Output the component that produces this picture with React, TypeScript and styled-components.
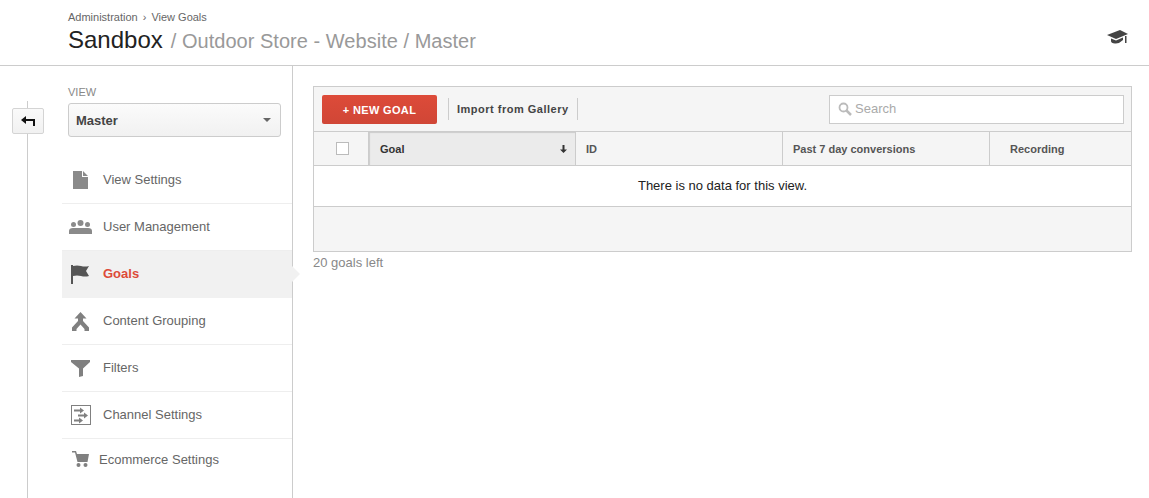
import React from "react";
import styled, { createGlobalStyle } from "styled-components";

const GlobalStyle = createGlobalStyle`
  html, body { margin: 0; padding: 0; background: #fff; }
  body { font-family: "Liberation Sans", Arial, sans-serif; overflow: hidden; }
  * { box-sizing: border-box; }
`;

const Page = styled.div`
  width: 1149px;
  height: 498px;
  display: flex;
  flex-direction: column;
  overflow: hidden;
`;

const Header = styled.header`
  height: 66px;
  flex: none;
  border-bottom: 1px solid #ccc;
  padding: 11px 21px 0 68px;
  display: flex;
  justify-content: space-between;
`;

const Crumbs = styled.div`
  font-size: 11px;
  line-height: 13px;
  color: #666;
  display: flex;
  gap: 5px;
`;

const Title = styled.h1`
  margin: 2px 0 0;
  font-size: 24px;
  line-height: 28px;
  font-weight: 400;
  color: #222;
`;

const TitleRest = styled.span`
  font-size: 20px;
  color: #999;
  margin-left: 8px;
  letter-spacing: 0.03px;
`;

const CapIcon = styled.svg`
  width: 21px;
  height: 15px;
  margin-top: 19px;
  fill: #444;
`;

const Body = styled.div`
  flex: 1;
  display: flex;
  min-height: 0;
`;

const Rail = styled.div`
  width: 62px;
  flex: none;
  position: relative;
  padding: 42px 0 0 12px;
  &::before {
    content: "";
    position: absolute;
    left: 27px;
    top: 35px;
    bottom: 0;
    width: 1px;
    background: #ccc;
  }
`;

const BackButton = styled.button`
  position: relative;
  width: 32px;
  height: 26px;
  padding: 0;
  border: 1px solid #d4d4d4;
  border-radius: 2px;
  background: linear-gradient(#fafafa, #f1f1f1);
  display: flex;
  align-items: center;
  justify-content: center;
`;

const Sidebar = styled.aside`
  width: 231px;
  flex: none;
  border-right: 1px solid #ccc;
`;

const ViewBlock = styled.div`
  padding: 20px 11px 0 6px;
  height: 91px;
`;

const ViewLabel = styled.div`
  font-size: 11px;
  line-height: 13px;
  color: #888;
  margin-bottom: 4px;
`;

const Select = styled.div`
  height: 34px;
  border: 1px solid #ccc;
  border-radius: 3px;
  background: linear-gradient(#fbfbfb, #f1f1f1);
  padding: 0 9px 0 7px;
  display: flex;
  align-items: center;
  justify-content: space-between;
  font-size: 13px;
  font-weight: 700;
  color: #444;
`;

const Caret = styled.span`
  width: 0;
  height: 0;
  border-left: 4px solid transparent;
  border-right: 4px solid transparent;
  border-top: 4px solid #666;
`;

const NavItem = styled.div<{ $active?: boolean; $last?: boolean }>`
  position: relative;
  height: 47px;
  display: flex;
  align-items: center;
  font-size: 13px;
  color: ${(p) => (p.$active ? "#dd4b39" : "#666")};
  font-weight: ${(p) => (p.$active ? 700 : 400)};
  background: ${(p) => (p.$active ? "#f1f1f1" : "transparent")};
  border-bottom: 1px solid ${(p) => (p.$last || p.$active ? "transparent" : "#eee")};
  ${(p) =>
    p.$active &&
    `&::after {
      content: "";
      position: absolute;
      right: -8px;
      top: 15px;
      width: 0;
      height: 0;
      border-top: 8px solid transparent;
      border-bottom: 8px solid transparent;
      border-left: 8px solid #f1f1f1;
    }`}
`;

const NavIcon = styled.span<{ $wide?: boolean }>`
  width: ${(p) => (p.$wide ? 37 : 41)}px;
  flex: none;
  display: flex;
  justify-content: center;
  padding-right: ${(p) => (p.$wide ? 0 : 4)}px;
  margin-bottom: ${(p) => (p.$wide ? 6 : 0)}px;
  svg { display: block; }
`;

const NavText = styled.span<{ $wide?: boolean }>`
  margin-bottom: ${(p) => (p.$wide ? 6 : 2)}px;
`;

const Main = styled.main`
  flex: 1;
  padding: 20px 17px 0 20px;
`;

const Table = styled.div`
  border: 1px solid #ccc;
  background: #f5f5f5;
`;

const Toolbar = styled.div`
  height: 45px;
  padding: 8px 7px 0 8px;
  display: flex;
  align-items: flex-start;
  border-bottom: 1px solid #ccc;
`;

const NewGoal = styled.button`
  width: 115px;
  height: 29px;
  border: 0;
  border-radius: 2px;
  background: linear-gradient(#dd4b39, #d04636);
  color: #fff;
  font: 700 11px "Liberation Sans", Arial, sans-serif;
  letter-spacing: 0.35px;
  padding: 0;
`;

const ImportLink = styled.div`
  margin: 3px 0 0 11px;
  height: 22px;
  padding: 0 8px;
  border-left: 1px solid #ccc;
  border-right: 1px solid #ccc;
  font-size: 11px;
  font-weight: 700;
  letter-spacing: 0.5px;
  line-height: 22px;
  color: #444;
`;

const Search = styled.div`
  margin-left: auto;
  width: 295px;
  height: 29px;
  background: #fff;
  border: 1px solid #ccc;
  display: flex;
  align-items: center;
  gap: 3px;
  padding: 0 0 2px 8px;
  font-size: 13px;
  color: #aaa;
`;

const HeadRow = styled.div`
  height: 34px;
  display: grid;
  grid-template-columns: 55px 207px 207px 207px 1fr;
  border-bottom: 1px solid #ccc;
  font-size: 11px;
  font-weight: 700;
  color: #555;
`;

const HeadCell = styled.div<{ $sorted?: boolean; $pad?: number }>`
  display: flex;
  align-items: center;
  justify-content: space-between;
  padding: 0 8px 0 ${(p) => p.$pad ?? 10}px;
  border-right: 1px solid #ccc;
  ${(p) =>
    p.$sorted &&
    `background: #ebebeb;
     color: #333;
     padding-left: 11px;
     padding-right: 8px;
     box-shadow: inset 1px 1px 1px #ccc;`}
  &:last-child { border-right: 0; }
`;

const CheckCell = styled(HeadCell)`
  justify-content: flex-start;
  padding-left: 22px;
`;

const Checkbox = styled.span`
  width: 13px;
  height: 13px;
  background: #fff;
  border: 1px solid #bbb;
`;

const EmptyRow = styled.div`
  height: 41px;
  background: #fff;
  border-bottom: 1px solid #ccc;
  display: flex;
  align-items: center;
  justify-content: center;
  font-size: 13px;
  color: #222;
  padding-bottom: 2px;
`;

const TableFoot = styled.div`
  height: 44px;
`;

const GoalsLeft = styled.div`
  margin-top: 3px;
  font-size: 13px;
  line-height: 16px;
  color: #888;
`;

const items = [
  {
    label: "View Settings",
    icon: (
      <svg width="15" height="18" viewBox="0 0 15 18" fill="#8a8a8a">
        <path d="M0 0h9v6h6v12H0zM10 0l5 5h-5z" />
      </svg>
    ),
  },
  {
    label: "User Management",
    icon: (
      <svg width="23" height="14" viewBox="0 0 23 14" fill="#8a8a8a">
        <circle cx="11.500" cy="3" r="3" />
        <circle cx="4.500" cy="4.500" r="2.500" />
        <circle cx="18.500" cy="4.500" r="2.500" />
        <path d="M0 14v-3q0-3 4-3h15q4 0 4 3v3z" />
      </svg>
    ),
  },
  {
    label: "Goals",
    active: true,
    icon: (
      <svg width="19" height="19" viewBox="0 0 19 19" fill="#555">
        <path d="M0 0h2v19H0zM2 1q4-1 8 0t8 0l-3 5 3 5q-4 1-8 0t-8 0z" />
      </svg>
    ),
  },
  {
    label: "Content Grouping",
    icon: (
      <svg width="17" height="19" viewBox="0 0 17 19" fill="#808080">
        <path d="M8.500 0l6 6.500h-3.500v2.500L17 15.500V19h-4.500v-2L8.500 12.500 4.500 17v2H0v-3.500L6 9V6.500H2.500z" />
      </svg>
    ),
  },
  {
    label: "Filters",
    icon: (
      <svg width="19" height="17" viewBox="0 0 19 17" fill="#808080">
        <path d="M0 0h19v2l-7 6.500V16l-4 1V8.500L0 2z" />
      </svg>
    ),
  },
  {
    label: "Channel Settings",
    icon: (
      <svg width="20" height="20" viewBox="0 0 20 20" fill="none" stroke="#808080">
        <rect x="0.500" y="0.500" width="19" height="19" />
        <path d="M3 4.500h6V2.500l4 3-4 3V6.500H3zM7 9.500h6V7.500l4 3-4 3v-2H7zM3 14.500h5v-2l4 3-4 3v-2H3z" fill="#808080" stroke="none" />
      </svg>
    ),
  },
  {
    label: "Ecommerce Settings",
    wide: true,
    icon: (
      <svg width="17" height="16" viewBox="0 0 17 16" fill="#808080">
        <path d="M0 0h4l1 3h12l-1.500 8H5.500L3 1.500H0z" />
        <circle cx="6.500" cy="14" r="2" />
        <circle cx="13.500" cy="14" r="2" />
      </svg>
    ),
  },
];

export default function App() {
  return (
    <Page>
      <GlobalStyle />
      <Header>
        <div>
          <Crumbs>
            <span>Administration</span>
            <span>›</span>
            <span>View Goals</span>
          </Crumbs>
          <Title>
            Sandbox<TitleRest>/ Outdoor Store - Website / Master</TitleRest>
          </Title>
        </div>
        <CapIcon viewBox="0 0 21 15">
          <path d="M0 5L13 0l8 4-12 5z" />
          <path d="M4 8.500l5 2 7-3V10q-4 4-8 3.500T4 11z" />
          <path d="M18 6h1.500v7H18z" />
        </CapIcon>
      </Header>
      <Body>
        <Rail>
          <BackButton>
            <svg width="14" height="10" viewBox="0 0 14 10" fill="#111">
              <path d="M5 0v3h9v7h-2V5H5v3L0 4z" />
            </svg>
          </BackButton>
        </Rail>
        <Sidebar>
          <ViewBlock>
            <ViewLabel>VIEW</ViewLabel>
            <Select>
              Master
              <Caret />
            </Select>
          </ViewBlock>
          {items.map((item, i) => (
            <NavItem key={item.label} $active={item.active} $last={i === items.length - 1}>
              <NavIcon $wide={item.wide}>{item.icon}</NavIcon>
              <NavText $wide={item.wide}>{item.label}</NavText>
            </NavItem>
          ))}
        </Sidebar>
        <Main>
          <Table>
            <Toolbar>
              <NewGoal>+ NEW GOAL</NewGoal>
              <ImportLink>Import from Gallery</ImportLink>
              <Search>
                <svg width="14" height="14" viewBox="0 0 14 14" fill="none" stroke="#bbb" strokeWidth="1.800">
                  <circle cx="5.500" cy="5.500" r="4" />
                  <path d="M8.500 8.500L13 13" strokeWidth="2.500" />
                </svg>
                Search
              </Search>
            </Toolbar>
            <HeadRow>
              <CheckCell>
                <Checkbox />
              </CheckCell>
              <HeadCell $sorted>
                Goal
                <svg width="7" height="8" viewBox="0 0 7 8" fill="#333">
                  <path d="M2.500 0h2v4.500H7L3.500 8 0 4.500h2.500z" />
                </svg>
              </HeadCell>
              <HeadCell>ID</HeadCell>
              <HeadCell>Past 7 day conversions</HeadCell>
              <HeadCell $pad={20}>Recording</HeadCell>
            </HeadRow>
            <EmptyRow>There is no data for this view.</EmptyRow>
            <TableFoot />
          </Table>
          <GoalsLeft>20 goals left</GoalsLeft>
        </Main>
      </Body>
    </Page>
  );
}
